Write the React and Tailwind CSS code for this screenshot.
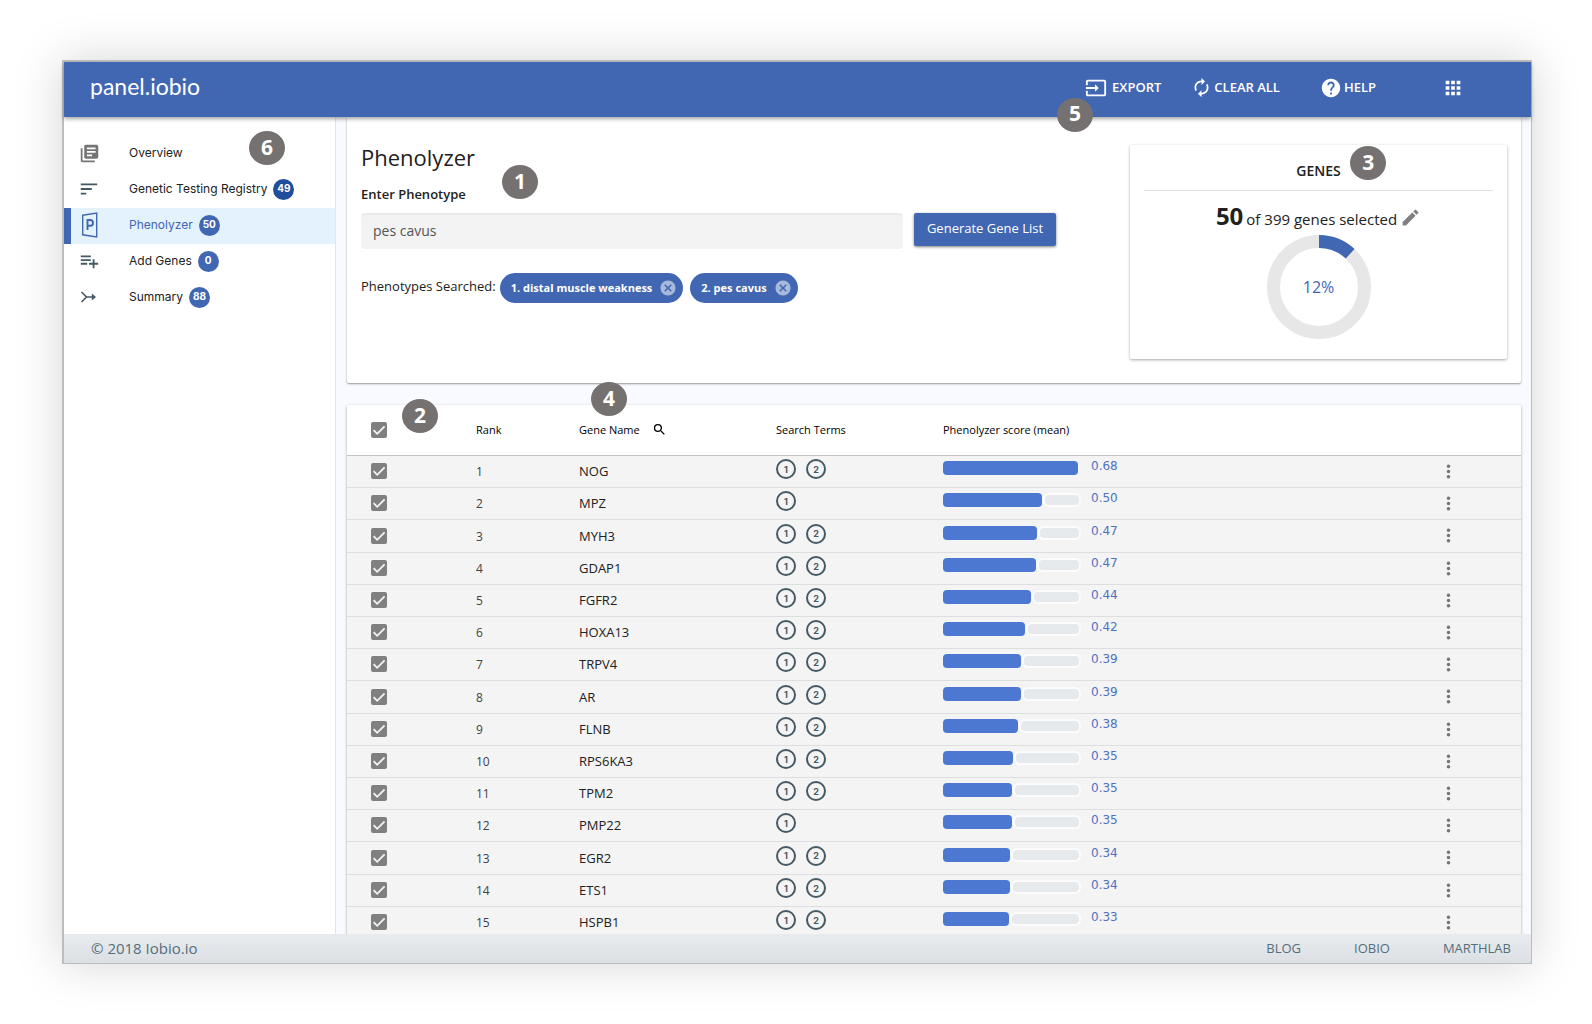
import { useState } from "react";
import {
  MdApps,
  MdAutorenew,
  MdCancel,
  MdEdit,
  MdHelp,
  MdInput,
  MdLibraryBooks,
  MdMoreVert,
  MdPlaylistAdd,
  MdSearch,
  MdSort,
} from "react-icons/md";

const GENES = [
  { name: "NOG", terms: [1, 2], score: "0.68", bar: 135 },
  { name: "MPZ", terms: [1], score: "0.50", bar: 99 },
  { name: "MYH3", terms: [1, 2], score: "0.47", bar: 94 },
  { name: "GDAP1", terms: [1, 2], score: "0.47", bar: 93 },
  { name: "FGFR2", terms: [1, 2], score: "0.44", bar: 88 },
  { name: "HOXA13", terms: [1, 2], score: "0.42", bar: 82 },
  { name: "TRPV4", terms: [1, 2], score: "0.39", bar: 78 },
  { name: "AR", terms: [1, 2], score: "0.39", bar: 78 },
  { name: "FLNB", terms: [1, 2], score: "0.38", bar: 75 },
  { name: "RPS6KA3", terms: [1, 2], score: "0.35", bar: 70 },
  { name: "TPM2", terms: [1, 2], score: "0.35", bar: 69 },
  { name: "PMP22", terms: [1], score: "0.35", bar: 69 },
  { name: "EGR2", terms: [1, 2], score: "0.34", bar: 67 },
  { name: "ETS1", terms: [1, 2], score: "0.34", bar: 67 },
  { name: "HSPB1", terms: [1, 2], score: "0.33", bar: 66 },
];

function PhenolyzerIcon() {
  return (
    <svg width="18" height="26" viewBox="0 0 18 26" fill="none" stroke="currentColor" aria-hidden="true">
      <path d="M2.7 3.2 16.7 1v24l-14-2.2z" strokeWidth="1.4" />
      <path d="M7.5 18V8h2.6a2.9 2.9 0 0 1 0 5.8H7.5" strokeWidth="1.9" />
    </svg>
  );
}

function MergeIcon() {
  return (
    <svg width="18" height="14" viewBox="0 0 18 14" fill="none" stroke="currentColor" strokeWidth="1.6" aria-hidden="true">
      <path d="M1.5 2l5 5-5 5M6.5 7H15" />
      <path d="M11.8 3.4 16 7l-4.2 3.6z" fill="currentColor" stroke="none" />
    </svg>
  );
}

const NAV = [
  { label: "Overview", icon: <MdLibraryBooks size={21} />, tone: "text-[#757575]" },
  { label: "Genetic Testing Registry", icon: <MdSort size={22} />, count: 49, tone: "text-[#455a64]" },
  { label: "Phenolyzer", icon: <PhenolyzerIcon />, count: 50, active: true, tone: "text-[#4267b2]" },
  { label: "Add Genes", icon: <MdPlaylistAdd size={22} />, count: 0, tone: "text-[#455a64]" },
  { label: "Summary", icon: <MergeIcon />, count: 88, tone: "text-[#455a64]" },
];

function Marker({ n, className }) {
  return (
    <span
      className={`absolute z-20 flex h-[34px] w-9 items-center justify-center rounded-[50%] bg-[#767171] pb-0.5 text-[21px] leading-none font-bold text-white ${className}`}
    >
      {n}
    </span>
  );
}

function Check({ label }) {
  return (
    <label className="relative block size-4">
      <input
        type="checkbox"
        defaultChecked
        aria-label={label}
        className="peer block size-4 appearance-none rounded-xs border-2 border-[#808080] checked:bg-[#808080]"
      />
      <svg
        viewBox="0 0 16 16"
        className="pointer-events-none absolute inset-0 hidden size-4 peer-checked:block"
        fill="none"
        stroke="#f5f5f5"
        strokeWidth="1.8"
        aria-hidden="true"
      >
        <path d="M2.6 8.2 6.2 11.8 13.6 4.4" />
      </svg>
    </label>
  );
}

function Chip({ children }) {
  return (
    <span className="flex h-[30px] items-center gap-[7px] rounded-full bg-[#4267b2] pr-1.5 pl-[11px] text-[11px] font-bold text-white">
      {children}
      <button type="button" aria-label="Remove" className="text-[#a9b9dc]">
        <MdCancel size={18} />
      </button>
    </span>
  );
}

export default function App() {
  const [phenotype, setPhenotype] = useState("pes cavus");
  return (
    <div className="h-screen bg-white py-[60px] pr-[60px] pl-[62px] font-['Open_Sans','Noto_Sans',sans-serif] text-[#212121]">
      <div className="flex h-full flex-col border-t-2 border-r border-b border-l-2 border-[#bdbdbd] bg-[#f9faff] shadow-[0_0_45px_rgba(0,0,0,0.17)]">
        <header className="relative z-10 flex h-[55px] shrink-0 items-center bg-[#4267b2] pr-[67px] pb-1 pl-[26px] text-[13px] font-semibold text-white shadow-[0_2px_4px_rgba(0,0,0,0.35)]">
          <h1 className="mr-auto pb-1 font-[Lato,sans-serif] text-[23px] leading-7 font-normal">panel.iobio</h1>
          <button type="button" className="relative mr-[30px] flex items-center gap-[5px]">
            <MdInput size={22} />
            EXPORT
            <Marker n={5} className="top-[21px] -left-7" />
          </button>
          <button type="button" className="mr-10 flex items-center gap-0.5">
            <MdAutorenew size={21} />
            CLEAR ALL
          </button>
          <button type="button" className="mr-[66px] flex items-center gap-0.5">
            <MdHelp size={22} />
            HELP
          </button>
          <button type="button" aria-label="Apps">
            <MdApps size={22} />
          </button>
        </header>

        <div className="flex min-h-0 flex-1 overflow-hidden">
          <nav className="relative w-[272px] shrink-0 border-r border-[#e4e5ea] bg-white pt-[19px]">
            <Marker n={6} className="top-3.5 left-[185px]" />
            {NAV.map((item) => (
              <a
                key={item.label}
                href="#"
                className={
                  item.active
                    ? "flex h-9 items-center border-l-[7px] border-[#4267b2] bg-[#e3f2fd] pb-0.5 font-[Inter,sans-serif] text-xs text-[#4267b2]"
                    : "flex h-9 items-center border-l-[7px] border-transparent pb-0.5 font-[Inter,sans-serif] text-xs text-[#212121]"
                }
              >
                <span className={`ml-[7px] flex w-[22px] justify-center ${item.tone}`}>{item.icon}</span>
                <span className="ml-[29px]">{item.label}</span>
                {item.count !== undefined && (
                  <span
                    className={
                      item.count === 49
                        ? "ml-1.5 flex size-[21px] items-center justify-center rounded-full bg-[#1f4e9c] text-[10px] font-bold text-white"
                        : "ml-1.5 flex size-[21px] items-center justify-center rounded-full bg-[#4267b2] text-[10px] font-bold text-white"
                    }
                  >
                    {item.count}
                  </span>
                )}
              </a>
            ))}
          </nav>

          <main className="min-w-0 flex-1 pr-2.5 pl-[11px]">
            <section className="relative flex h-[266px] rounded-b-xs bg-white px-3.5 pt-[27px] shadow-[0_1px_2px_rgba(0,0,0,0.4)]">
              <div className="min-w-0 flex-1 pr-[74px]">
                <h2 className="text-[22px] leading-[26px]">Phenolyzer</h2>
                <label htmlFor="phenotype" className="mt-3.5 block text-[13px] leading-5 font-semibold">
                  Enter Phenotype
                </label>
                <Marker n={1} className="top-12 left-[155px]" />
                <div className="mt-[9px] flex items-start gap-[11px]">
                  <input
                    id="phenotype"
                    value={phenotype}
                    onChange={(e) => setPhenotype(e.target.value)}
                    className="h-9 min-w-0 flex-1 rounded-sm border-t-2 border-[#e9e9e9] bg-[#f3f3f3] px-3 pb-1 text-sm text-[#555]"
                  />
                  <button
                    type="button"
                    className="h-[33px] w-[142px] rounded-xs bg-[#4267b2] pb-0.5 text-[13px] font-medium text-white shadow-[0_1px_3px_rgba(0,0,0,0.5)]"
                  >
                    Generate Gene List
                  </button>
                </div>
                <div className="mt-6 flex items-center gap-1">
                  <span className="pb-0.5 text-[13px]">Phenotypes Searched:</span>
                  <div className="flex gap-[7px]">
                    <Chip>1. distal muscle weakness</Chip>
                    <Chip>2. pes cavus</Chip>
                  </div>
                </div>
              </div>
              <aside className="relative mt-px h-[214px] w-[377px] shrink-0 rounded-xs px-3.5 pt-4 text-center shadow-[0_1px_3px_rgba(0,0,0,0.35)]">
                <h3 className="border-b border-[#e0e0e0] pb-[9px] text-sm leading-5 font-semibold">
                  <span className="relative">
                    GENES
                    <Marker n={3} className="-top-[15px] left-[54px]" />
                  </span>
                </h3>
                <div className="mt-[9px] flex items-baseline justify-center gap-[3px] leading-8">
                  <span className="text-2xl leading-8 font-bold">50</span>
                  <span className="text-[15px]">of 399 genes selected</span>
                  <button type="button" aria-label="Edit selection" className="self-center text-[#808080]">
                    <MdEdit size={21} />
                  </button>
                </div>
                <div className="relative mx-auto size-[104px]">
                  <svg viewBox="0 0 104 104" fill="none" strokeWidth="13" aria-hidden="true">
                    <circle cx="52" cy="52" r="45.5" stroke="#e7e7e7" />
                    <circle
                      cx="52"
                      cy="52"
                      r="45.5"
                      stroke="#4267b2"
                      pathLength="100"
                      strokeDasharray="12 88"
                      transform="rotate(-90 52 52)"
                    />
                  </svg>
                  <span className="absolute inset-0 flex items-center justify-center text-base text-[#4267b2]">12%</span>
                </div>
              </aside>
            </section>

            <section className="relative mt-[22px] rounded-t-xs bg-white shadow-[0_1px_3px_rgba(0,0,0,0.35)]">
              <Marker n={2} className="-top-1.5 left-[55px]" />
              <Marker n={4} className="-top-[23px] left-[244px]" />
              <table className="w-full table-fixed border-collapse text-left">
                <thead>
                  <tr className="h-[50px] border-b border-[#c4c4c8] text-[11px] text-black [&>th]:font-normal">
                    <th className="w-[129px] pl-6">
                      <Check label="Select all genes" />
                    </th>
                    <th className="w-[103px]">Rank</th>
                    <th className="w-[197px]">
                      <span className="flex items-center gap-3">
                        Gene Name
                        <button type="button" aria-label="Search genes">
                          <MdSearch size={15} />
                        </button>
                      </span>
                    </th>
                    <th className="w-[167px]">Search Terms</th>
                    <th>Phenolyzer score (mean)</th>
                    <th className="w-[83px]" aria-label="Actions" />
                  </tr>
                </thead>
                <tbody>
                  {GENES.map((gene, i) => (
                    <tr key={gene.name} className="h-8 border-b border-[#dedee0] bg-[#f4f4f4] nth-[5n+3]:h-[33px]">
                      <td className="pl-6">
                        <Check label={`Select ${gene.name}`} />
                      </td>
                      <td className="pt-0.5 text-xs text-[#424242]">{i + 1}</td>
                      <td className="text-[13px] leading-5 font-medium">{gene.name}</td>
                      <td>
                        <span className="flex gap-2.5 pb-1">
                          {gene.terms.map((t) => (
                            <span
                              key={t}
                              className="flex size-5 items-center justify-center rounded-full border-2 border-[#455a64] font-[Inter,sans-serif] text-[9px] leading-none font-bold text-[#455a64]"
                            >
                              {t}
                            </span>
                          ))}
                        </span>
                      </td>
                      <td>
                        <span className="flex items-center gap-2.5 pb-1.5">
                          <span className="flex h-3.5 w-[138px] gap-px">
                            <span className="rounded-sm bg-[#4c78d2]" style={{ width: gene.bar }} />
                            {gene.bar < 135 && (
                              <span className="flex-1 rounded-md border-2 border-[#fcfcfc] bg-[#e6eaed]" />
                            )}
                          </span>
                          <span className="pb-1 font-['DejaVu_Sans',sans-serif] text-xs leading-4 text-[#4f72c0]">
                            {gene.score}
                          </span>
                        </span>
                      </td>
                      <td>
                        <button type="button" aria-label={`Actions for ${gene.name}`} className="block text-[#757575]">
                          <MdMoreVert size={21} />
                        </button>
                      </td>
                    </tr>
                  ))}
                </tbody>
              </table>
            </section>
          </main>
        </div>

        <footer className="relative z-10 flex h-[29px] shrink-0 items-center bg-linear-to-b from-[#e8ecef] to-[#dcdfe3] pr-5 pl-[27px] text-[#546e7a]">
          <span className="mr-auto text-[15px]">© 2018 Iobio.io</span>
          <nav className="flex gap-[53px] text-[13px]">
            <a href="#">BLOG</a>
            <a href="#">IOBIO</a>
            <a href="#">MARTHLAB</a>
          </nav>
        </footer>
      </div>
    </div>
  );
}
